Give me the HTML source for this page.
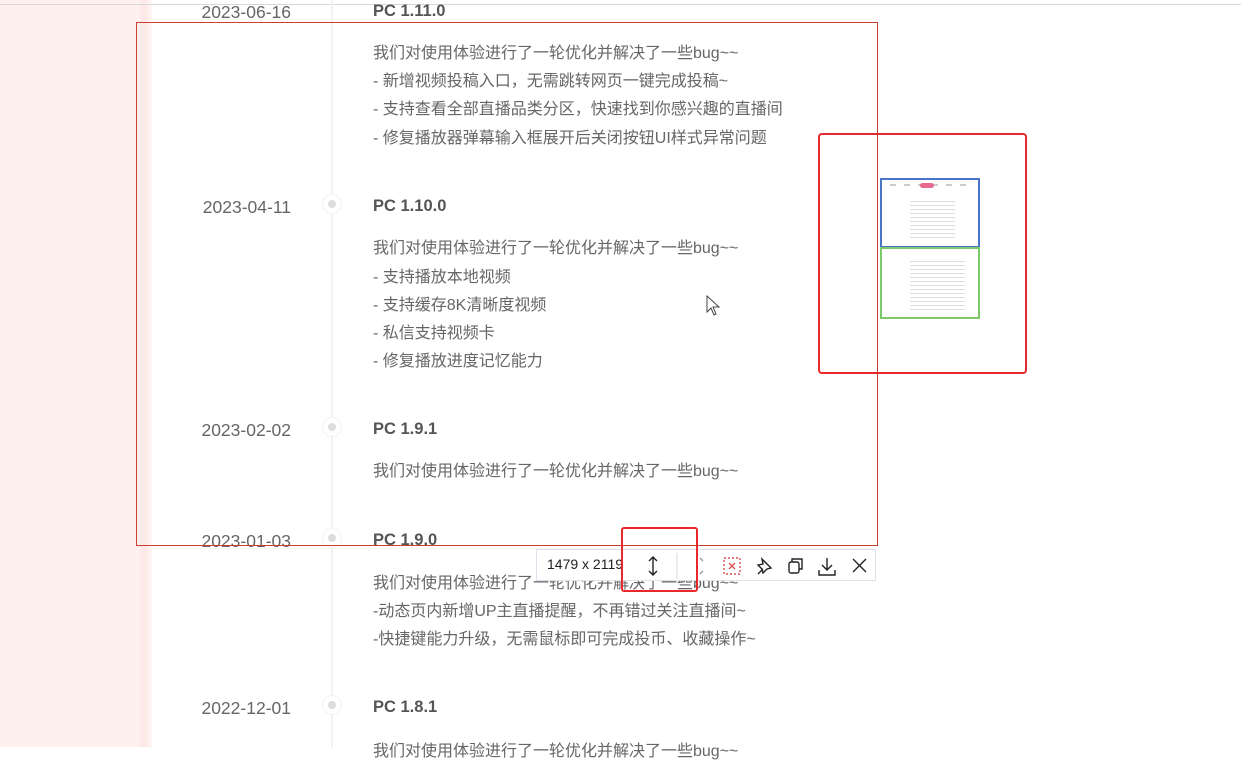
<!DOCTYPE html>
<html><head><meta charset="utf-8"><style>
*{margin:0;padding:0;box-sizing:border-box}
body{width:1241px;height:747px;overflow:hidden;background:#fff;position:relative;font-family:"Liberation Sans","Noto Sans CJK SC",sans-serif;}
.pink{position:absolute;left:0;top:0;width:152px;height:747px;background:linear-gradient(to right,#fff0f0 0,#fff0f0 137px,#fde6e6 145px,#fff8f8 152px);}
.topline{position:absolute;left:0;top:4px;width:1241px;height:1px;background:#d8d8d8}
.vline{position:absolute;left:331px;top:0;width:2px;height:747px;background:#f2f2f2}
.t{position:absolute;height:28px;line-height:28px;font-size:16px;white-space:nowrap}
.d{color:#666;right:950px;text-align:right;font-size:17.5px}
.h{left:373px;color:#555;font-weight:bold;font-size:16.5px}
.b{left:373px;color:#666}
.dot{position:absolute;left:322px;width:20px;height:20px;border-radius:50%;background:#fff;border:1px solid #f3f3f3}
.dot:after{content:"";position:absolute;left:5px;top:5px;width:8px;height:8px;border-radius:50%;background:#ddd}
.rect{position:absolute;left:136px;top:22px;width:742px;height:524px;border:1.5px solid #c8412f}
.rbox{position:absolute;left:818px;top:133px;width:209px;height:241px;border:2.5px solid #e8282a;border-radius:4px}
.thumb{position:absolute;left:880px;top:178px;width:100px;height:141px;background:#fff}
.tool{position:absolute;left:536px;top:549px;width:340px;height:32px;background:#fff;border:1px solid #dde3ea;font-size:14px;color:#222}
.rsm{position:absolute;left:621px;top:527px;width:77px;height:65px;border:2.5px solid #e8282a;border-radius:3px}
</style></head><body>
<div class="pink"></div>
<div class="topline"></div>
<div class="vline"></div>

<div class="t d" style="top:-2px">2023-06-16</div>
<div class="t h" style="top:-3px">PC 1.11.0</div>
<div class="t b" style="top:40px">我们对使用体验进行了一轮优化并解决了一些bug~~</div>
<div class="t b" style="top:68px">- 新增视频投稿入口，无需跳转网页一键完成投稿~</div>
<div class="t b" style="top:96px">- 支持查看全部直播品类分区，快速找到你感兴趣的直播间</div>
<div class="t b" style="top:125px">- 修复播放器弹幕输入框展开后关闭按钮UI样式异常问题</div>

<div class="t d" style="top:193px">2023-04-11</div>
<div class="dot" style="top:194px"></div>
<div class="t h" style="top:192px">PC 1.10.0</div>
<div class="t b" style="top:235px">我们对使用体验进行了一轮优化并解决了一些bug~~</div>
<div class="t b" style="top:264px">- 支持播放本地视频</div>
<div class="t b" style="top:292px">- 支持缓存8K清晰度视频</div>
<div class="t b" style="top:320px">- 私信支持视频卡</div>
<div class="t b" style="top:348px">- 修复播放进度记忆能力</div>

<div class="t d" style="top:416px">2023-02-02</div>
<div class="dot" style="top:417px"></div>
<div class="t h" style="top:415px">PC 1.9.1</div>
<div class="t b" style="top:458px">我们对使用体验进行了一轮优化并解决了一些bug~~</div>

<div class="t d" style="top:527px">2023-01-03</div>
<div class="dot" style="top:528px"></div>
<div class="t h" style="top:526px">PC 1.9.0</div>
<div class="t b" style="top:570px">我们对使用体验进行了一轮优化并解决了一些bug~~</div>
<div class="t b" style="top:598px">-动态页内新增UP主直播提醒，不再错过关注直播间~</div>
<div class="t b" style="top:626px">-快捷键能力升级，无需鼠标即可完成投币、收藏操作~</div>

<div class="t d" style="top:694px">2022-12-01</div>
<div class="dot" style="top:695px"></div>
<div class="t h" style="top:693px">PC 1.8.1</div>
<div class="t b" style="top:738px">我们对使用体验进行了一轮优化并解决了一些bug~~</div>

<svg style="position:absolute;left:706px;top:295px" width="16" height="22" viewBox="0 0 16 22"><path d="M1 1 L1 17 L5 13 L8 20 L10 19 L7 12 L13 12 Z" fill="#fff" stroke="#444" stroke-width="1"/></svg>

<div class="rect"></div>
<div class="rbox"></div>
<div class="thumb">
 <div style="position:absolute;left:0;top:0;width:100px;height:70px;border:2px solid #4a76c8"></div>
 <div style="position:absolute;left:0;top:69px;width:100px;height:72px;border:2px solid #7cc96a"></div>
 <div style="position:absolute;left:10px;top:6px;width:80px;height:2px;background:repeating-linear-gradient(to right,#ccc 0,#ccc 6px,#fff 6px,#fff 14px)"></div>
 <div style="position:absolute;left:40px;top:5px;width:14px;height:5px;border-radius:3px;background:#e86a90"></div>
 <div style="position:absolute;left:30px;top:20px;width:45px;height:40px;background:repeating-linear-gradient(#fff 0,#fff 3px,#ddd 3px,#ddd 4px)"></div>
 <div style="position:absolute;left:30px;top:80px;width:55px;height:55px;background:repeating-linear-gradient(#fff 0,#fff 3px,#ddd 3px,#ddd 4px)"></div>
</div>

<div class="tool">
 <span style="position:absolute;left:10px;top:6px">1479 x 2119</span>
 <svg style="position:absolute;left:0;top:0" width="340" height="32" viewBox="0 0 340 32">
  <g fill="none" stroke="#222" stroke-width="1.4">
   <path d="M116 7 V25 M112 11 L116 7 L120 11 M112 21 L116 25 L120 21"/>
   <line x1="140" y1="3" x2="140" y2="29" stroke="#e5e5e5"/>
   <path d="M163 8 L166 11 M163 24 L166 21" stroke="#999"/>
   <rect x="187" y="8" width="16" height="16" stroke="#e05050" stroke-dasharray="2 2"/>
   <path d="M192 13 L198 19 M198 13 L192 19" stroke="#e05050"/>
   <path d="M221 24 L226 19 M225 9 L234 18 L230 19 L226 23 L225 19 L221 15 L226 14 Z"/>
   <rect x="252" y="12" width="10" height="11" rx="2"/><path d="M255 12 V9 H265 V19 H262"/>
   <path d="M290 8 V20 M285 15 L290 20 L295 15 M282 20 V25 H298 V20"/>
   <path d="M316 9 L329 22 M329 9 L316 22"/>
  </g>
 </svg>
</div>
<div class="rsm"></div>
</body></html>
